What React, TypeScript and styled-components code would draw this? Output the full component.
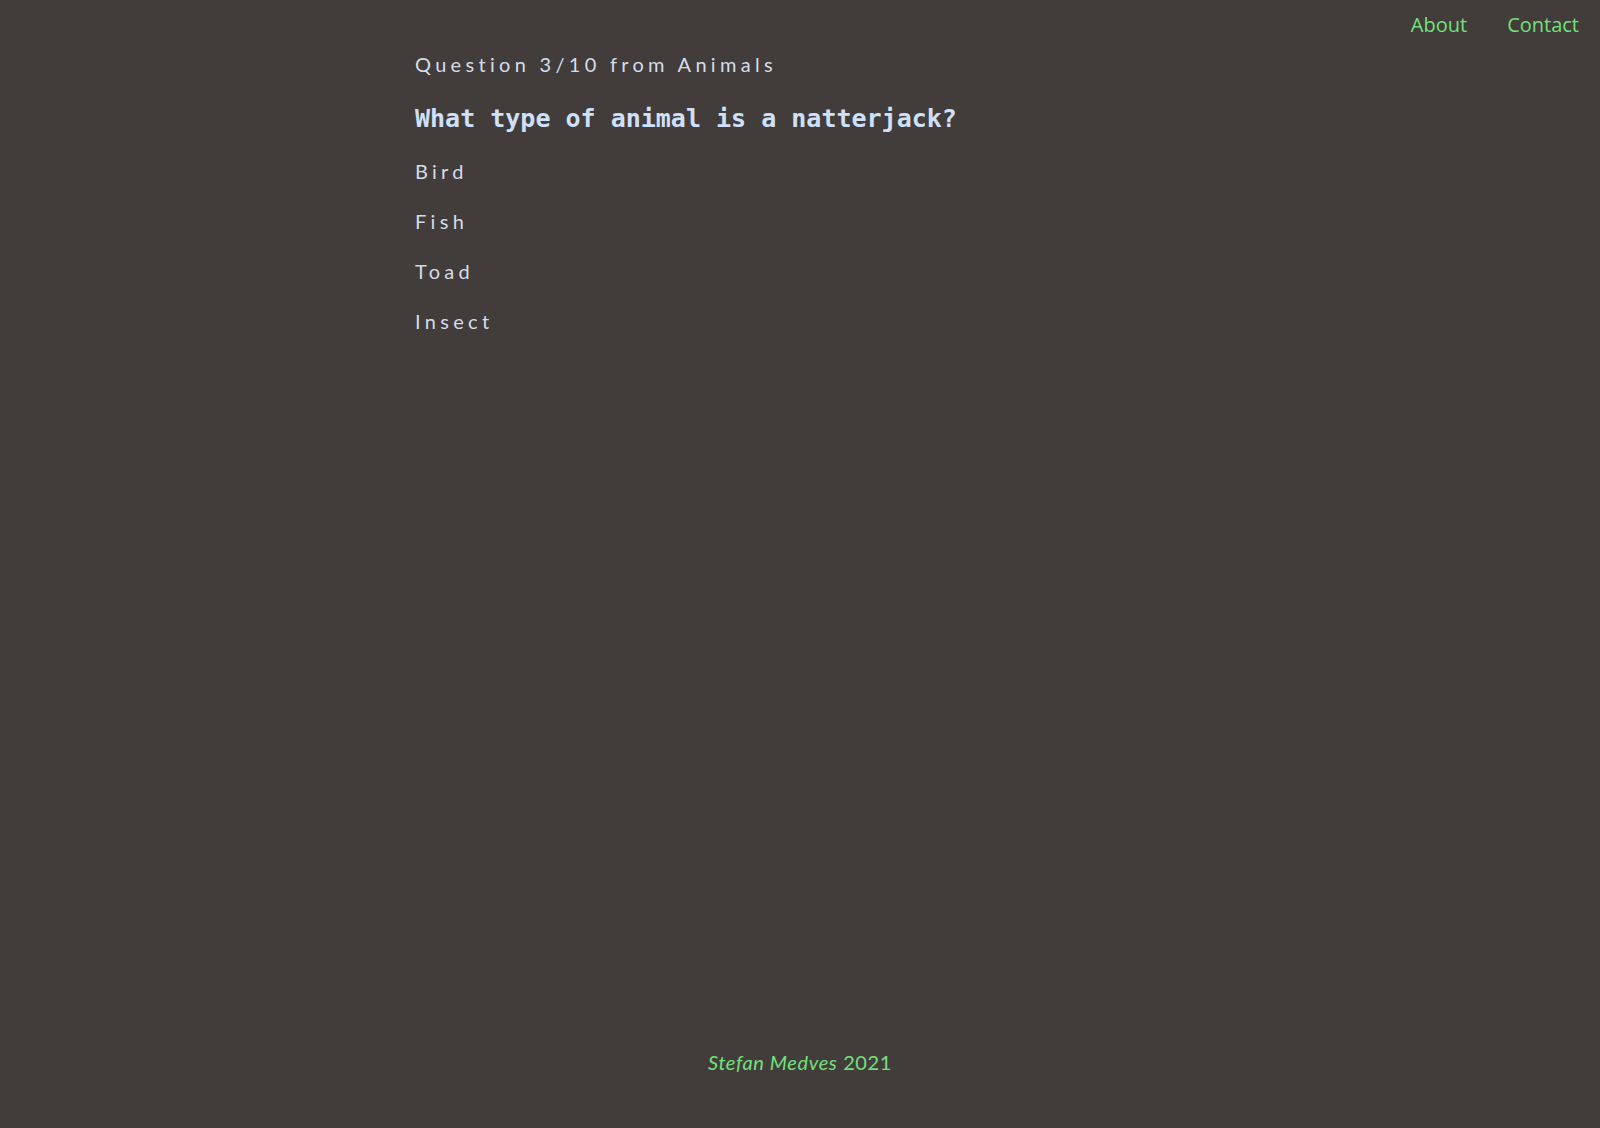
import React from "react";
import styled, { createGlobalStyle } from "styled-components";

const Global = createGlobalStyle`
  html, body { margin: 0; padding: 0; background: #423d3a; }
  body { font-family: "Lato", "Open Sans", sans-serif; }
`;

const Page = styled.div`
  min-height: 1128px;
  display: flex;
  flex-direction: column;
  background: #423d3a;
`;

const Nav = styled.nav`
  display: flex;
  justify-content: flex-end;
  gap: 40px;
  padding: 11px 21px 0 0;
  height: 40px;
  box-sizing: border-box;
`;

const NavLink = styled.a`
  font-family: "Open Sans", sans-serif;
  font-size: 20px;
  color: #72e07c;
  text-decoration: none;
  line-height: 28px;
`;

const Main = styled.main`
  flex: 1;
  width: 800px;
  margin: 0 auto;
  padding: 0 15px;
  box-sizing: border-box;
`;

const Sub = styled.div`
  font-family: "Lato", sans-serif;
  font-size: 20px;
  letter-spacing: 4.3px;
  color: #d4dcec;
  line-height: 28px;
  margin-top: 10px;
`;

const Heading = styled.h1`
  font-family: "DejaVu Sans Mono", monospace;
  font-weight: bold;
  font-size: 25px;
  color: #cfe0fb;
  margin: 26px 0 12px;
  line-height: 30px;
`;

const Options = styled.div`
  display: flex;
  flex-direction: column;
`;

const Option = styled.div`
  font-family: "Lato", sans-serif;
  font-size: 20px;
  letter-spacing: 4.3px;
  color: #d4dcec;
  line-height: 50px;
  height: 50px;
`;

const Footer = styled.footer`
  text-align: center;
  font-family: "Lato", sans-serif;
  font-size: 20px;
  letter-spacing: 0.6px;
  color: #72e07c;
  padding-bottom: 54px;
`;

const Name = styled.em`
  font-style: italic;
`;

export default function App() {
  return (
    <Page>
      <Global />
      <Nav>
        <NavLink href="#">About</NavLink>
        <NavLink href="#">Contact</NavLink>
      </Nav>
      <Main>
        <Sub>Question 3/10 from Animals</Sub>
        <Heading>What type of animal is a natterjack?</Heading>
        <Options>
          {["Bird", "Fish", "Toad", "Insect"].map((o) => (
            <Option key={o}>{o}</Option>
          ))}
        </Options>
      </Main>
      <Footer>
        <Name>Stefan Medves</Name> 2021
      </Footer>
    </Page>
  );
}
